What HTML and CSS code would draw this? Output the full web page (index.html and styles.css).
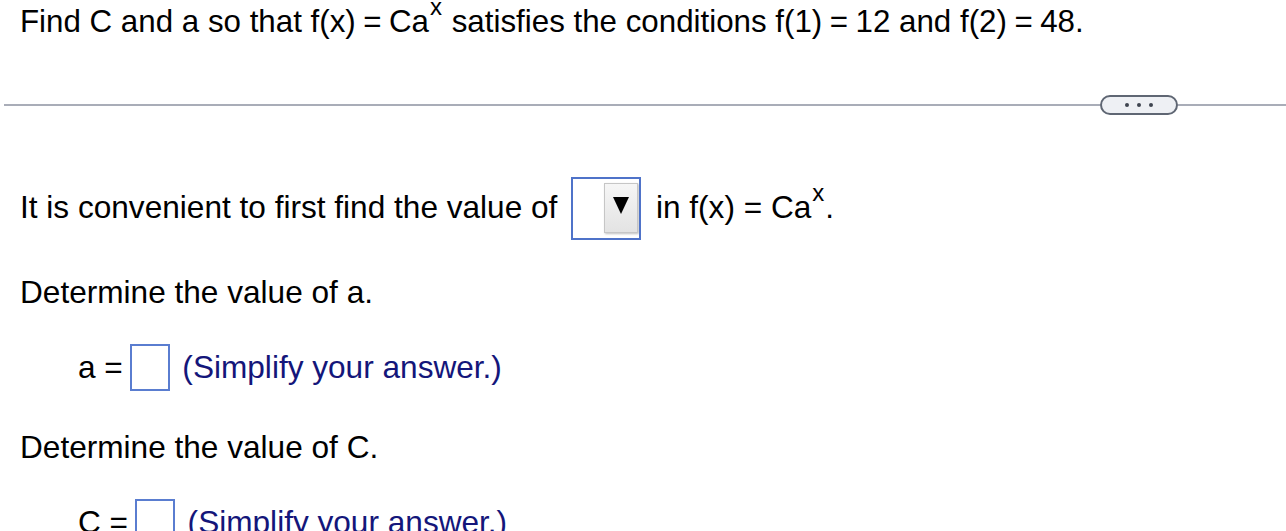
FILE: index.html
```html
<!DOCTYPE html>
<html lang="en">
<head>
<meta charset="utf-8">
<title>Exponential function</title>
<link rel="stylesheet" href="styles.css">
</head>
<body>
<div class="question">Find C and a so that f(x)<span class="eq">=</span>Ca<span class="sup">x</span> satisfies the conditions f(1)<span class="eq">=</span>12 and f(2)<span class="eq">=</span>48.</div>
<div class="divider">
  <span class="rule"></span>
  <span class="more"><i></i><i></i><i></i></span>
  <span class="rule rule-end"></span>
</div>
<div class="content">
  <p class="line first">It is convenient to first find the value of <span class="dropdown"><span class="dd-inner"><span class="dd-btn"><span class="tri"></span></span></span></span> in f(x) = Ca<span class="sup">x</span>.</p>
  <p class="line det-a">Determine the value of a.</p>
  <p class="line answer ans-a">a = <span class="box"></span> <span class="hint">(Simplify your answer.)</span></p>
  <p class="line det-c">Determine the value of C.</p>
  <p class="line answer ans-c">C = <span class="box"></span> <span class="hint">(Simplify your answer.)</span></p>
</div>
</body>
</html>
```
FILE: styles.css
```css
html, body {
  margin: 0;
  padding: 0;
  background: #ffffff;
  overflow: hidden;
}
body {
  font-family: "Liberation Sans", Arial, sans-serif;
  font-size: 31.3px;
  color: #000;
  width: 1286px;
  height: 531px;
}
.question {
  padding: 0 20px;
  line-height: 44px;
  white-space: nowrap;
}
.eq {
  margin: 0 7.5px;
}
.sup {
  font-size: 24px;
  vertical-align: 17px;
  line-height: 0;
  margin-left: 1px;
  margin-right: 1px;
}
.divider {
  display: flex;
  align-items: center;
  height: 20px;
  margin-top: 51px;
  padding-left: 4px;
}
.rule {
  flex: 1;
  height: 2px;
  background: #a9adb8;
}
.rule-end {
  flex: 0 0 108px;
}
.more {
  box-sizing: border-box;
  width: 78px;
  height: 20px;
  border: 2px solid #5f6673;
  border-radius: 10px;
  background: #eef0f4;
  display: flex;
  align-items: center;
  justify-content: center;
  gap: 8px;
}
.more i {
  display: block;
  width: 4px;
  height: 4px;
  border-radius: 50%;
  background: #3f4550;
}
.content {
  padding: 0 20px;
  font-size: 31.6px;
}
.line {
  margin: 0;
  line-height: 44px;
  white-space: nowrap;
}
.first {
  margin-top: 62px;
}
.det-a {
  margin-top: 30px;
}
.ans-a {
  margin-top: 30px;
}
.det-c {
  margin-top: 34px;
}
.ans-c {
  margin-top: 30px;
}
.answer {
  padding-left: 58px;
}
.dropdown {
  box-sizing: border-box;
  display: inline-block;
  width: 70px;
  height: 63px;
  border: 2px solid #4f73c9;
  margin: 0 6px 0 5px;
  vertical-align: -22px;
  overflow: hidden;
}
.dd-inner {
  display: flex;
  justify-content: flex-end;
  align-items: flex-start;
  height: 100%;
  padding: 4px 1px 0 0;
  box-sizing: border-box;
}
.dd-btn {
  box-sizing: border-box;
  display: flex;
  justify-content: center;
  align-items: flex-start;
  width: 34px;
  height: 50px;
  padding-top: 13px;
  border: 1px solid #c6c6c6;
  background: linear-gradient(#f6f6f6, #e3e3e3);
  box-shadow: 1px 1px 2px rgba(0, 0, 0, 0.25);
}
.tri {
  width: 0;
  height: 0;
  border-left: 8px solid transparent;
  border-right: 8px solid transparent;
  border-top: 17px solid #000;
}
.box {
  box-sizing: border-box;
  display: inline-block;
  width: 40px;
  height: 47px;
  border: 2px solid #5a7dd0;
  vertical-align: -13px;
  margin-left: -2px;
  overflow: hidden;
}
.hint {
  color: #14167a;
  margin-left: 4px;
}
```
